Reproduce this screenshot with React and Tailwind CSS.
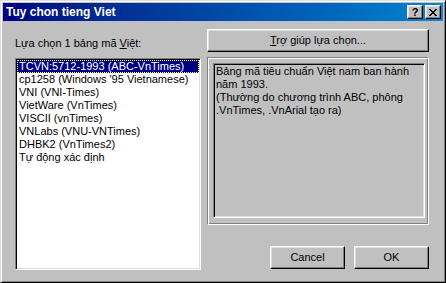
import React from 'react';

const items = [
  'TCVN:5712-1993 (ABC-VnTimes)',
  "cp1258 (Windows '95 Vietnamese)",
  'VNI (VNI-Times)',
  'VietWare (VnTimes)',
  'VISCII (vnTimes)',
  'VNLabs (VNU-VNTimes)',
  'DHBK2 (VnTimes2)',
  'Tự động xác định',
];

// raised win98 push button
const Btn = ({ className, children }) => (
  <div
    className={`flex items-center justify-center bg-[#c0c0c0] border border-t-white border-l-white border-r-black border-b-black shadow-[inset_-1px_-1px_#808080,inset_1px_1px_#dfdfdf] ${className}`}
  >
    {children}
  </div>
);

const CaptionBtn = ({ children }) => (
  <div className="w-[16px] h-[14px] flex items-center justify-center bg-[#c0c0c0] border border-t-white border-l-white border-r-black border-b-black shadow-[inset_-1px_-1px_#808080,inset_1px_1px_#dfdfdf]">
    {children}
  </div>
);

export default function App() {
  return (
    <div
      className="w-[446px] h-[283px] bg-[#c0c0c0] border border-t-[#dfdfdf] border-l-[#dfdfdf] border-r-black border-b-black shadow-[inset_1px_1px_#fff,inset_-1px_-1px_#808080] p-[2px] text-[11px] leading-[13px] text-black"
      style={{ fontFamily: '"Liberation Sans", Arial, sans-serif' }}
    >
      {/* title bar */}
      <div className="h-[18px] flex items-center bg-linear-to-r from-[#000080] to-[#1084d0] pl-[3px] pr-[2px]">
        <span className="flex-1 text-white font-bold text-[12px]">Tuy chon tieng Viet</span>
        <div className="flex gap-[0px]">
          <CaptionBtn>
            <span className="font-bold text-[11px] leading-none">?</span>
          </CaptionBtn>
          <div className="w-[2px]" />
          <CaptionBtn>
            <svg width="8" height="7" viewBox="0 0 8 7" shapeRendering="crispEdges">
              <path d="M0 0h2v1h-2zM6 0h2v1h-2zM1 1h2v1h-2zM5 1h2v1h-2zM2 2h4v1h-4zM3 3h2v1h-2zM2 4h4v1h-4zM1 5h2v1h-2zM5 5h2v1h-2zM0 6h2v1h-2zM6 6h2v1h-2z" fill="#000" />
            </svg>
          </CaptionBtn>
        </div>
      </div>

      <div className="flex pl-[12px] gap-[6px]">
        {/* left column */}
        <div className="flex flex-col w-[186px]">
          <div className="mt-[16px] h-[13px]">
            Lựa chọn 1 bảng mã <span className="underline">V</span>iệt:
          </div>
          <div className="mt-[8px] w-[186px] h-[212px] bg-white border border-t-[#808080] border-l-[#808080] border-r-white border-b-white shadow-[inset_1px_1px_#000,inset_-1px_-1px_#dfdfdf] p-[1px]">
            {items.map((it, i) => (
              <div
                key={it}
                className={
                  i === 0
                    ? 'h-[13px] pl-[2px] bg-[#000080] text-white outline-1 outline-dotted outline-[#ffff80] -outline-offset-1 whitespace-nowrap'
                    : 'h-[13px] pl-[2px] whitespace-nowrap'
                }
              >
                {it}
              </div>
            ))}
          </div>
        </div>

        {/* right column */}
        <div className="flex flex-col w-[222px]">
          <Btn className="mt-[8px] h-[23px] w-[222px]">
            <span>
              <span className="underline">T</span>rợ giúp lựa chọn...
            </span>
          </Btn>
          <div className="mt-[5px] h-[168px] w-[222px] border border-t-[#808080] border-l-[#808080] border-r-white border-b-white shadow-[inset_1px_1px_#fff,inset_-1px_-1px_#808080] pl-[5px] pt-[5px]">
            <div className="w-[212px] h-[155px] bg-[#c0c0c0] border border-t-[#808080] border-l-[#808080] border-r-white border-b-white shadow-[inset_1px_1px_#000,inset_-1px_-1px_#dfdfdf] pl-[2px] pt-[1px]">
              <div>Bảng mã tiêu chuẩn Việt nam ban hành</div>
              <div>năm 1993.</div>
              <div>(Thường do chương trình ABC, phông</div>
              <div>.VnTimes, .VnArial tạo ra)</div>
            </div>
          </div>
          <div className="mt-[21px] flex justify-end gap-[9px]">
            <Btn className="w-[75px] h-[23px]">Cancel</Btn>
            <Btn className="w-[75px] h-[23px]">OK</Btn>
          </div>
        </div>
      </div>
    </div>
  );
}
